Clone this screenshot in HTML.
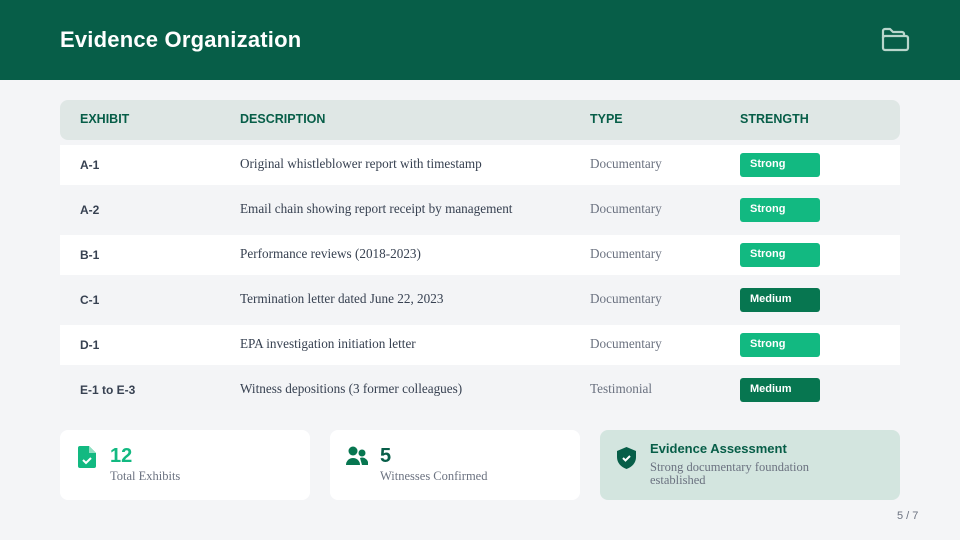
<!DOCTYPE html>
<html><head><meta charset="utf-8"><style>
*{margin:0;padding:0;box-sizing:border-box}
body{width:960px;height:540px;overflow:hidden;background:#f4f5f7;font-family:"Liberation Sans",sans-serif;position:relative}
.hdr{position:absolute;left:0;top:0;width:960px;height:80px;background:#075e48}
.hdr h1{position:absolute;left:60px;top:27px;color:#fff;font-size:22px;font-weight:bold;letter-spacing:0.2px}
.th{position:absolute;left:60px;top:100px;width:840px;height:40px;background:#dfe7e5;border-radius:8px}
.th span,.row span{position:absolute;top:0;line-height:37px}
.th span{color:#075e48;font-weight:bold;font-size:12.5px}
.row{position:absolute;left:60px;width:840px;height:40px}
.row .c1{left:20px;font-size:12px;font-weight:bold;color:#374151;line-height:40px}
.c2{left:180px;font-family:"Liberation Serif",serif;font-size:13.2px;color:#374151}
.c3{left:530px;font-family:"Liberation Serif",serif;font-size:13.2px;color:#6b7280}
.b{position:absolute;left:680px;top:8px;width:80px;height:24px;border-radius:3px;color:#fff;font-size:11px;font-weight:bold;line-height:22px;padding-left:10px}
.s{background:#12b981}.m{background:#077650}
.card{position:absolute;top:430px;height:70px;border-radius:8px;background:#fff}
.num{position:absolute;left:50px;top:15px;font-size:20px;font-weight:bold}
.lab{position:absolute;left:50px;top:39px;font-family:"Liberation Serif",serif;font-size:12.5px;color:#6b7280}
</style></head><body>
<div class="hdr"><h1>Evidence Organization</h1>
<svg style="position:absolute;left:880px;top:26px" width="32" height="28" viewBox="0 0 32 28" fill="none" stroke="#b9d6cc" stroke-width="2.2" stroke-linejoin="round"><path d="M3 12V5a2 2 0 0 1 2-2h5l3 3h9a2 2 0 0 1 2 2v2"/><path d="M3 12a2 2 0 0 1 2-2h21a2 2 0 0 1 2 2v10a2 2 0 0 1-2 2H5a2 2 0 0 1-2-2z"/></svg>
</div>
<div class="th"><span style="left:20px;line-height:38px">EXHIBIT</span><span style="left:180px;line-height:38px">DESCRIPTION</span><span style="left:530px;line-height:38px">TYPE</span><span style="left:680px;line-height:38px">STRENGTH</span></div>
<div class="row" style="top:145px;background:#fff"><span class="c1">A-1</span><span class="c2">Original whistleblower report with timestamp</span><span class="c3">Documentary</span><div class="b s">Strong</div></div>
<div class="row" style="top:190px;background:#f3f4f6"><span class="c1">A-2</span><span class="c2">Email chain showing report receipt by management</span><span class="c3">Documentary</span><div class="b s">Strong</div></div>
<div class="row" style="top:235px;background:#fff"><span class="c1">B-1</span><span class="c2">Performance reviews (2018-2023)</span><span class="c3">Documentary</span><div class="b s">Strong</div></div>
<div class="row" style="top:280px;background:#f3f4f6"><span class="c1">C-1</span><span class="c2">Termination letter dated June 22, 2023</span><span class="c3">Documentary</span><div class="b m">Medium</div></div>
<div class="row" style="top:325px;background:#fff"><span class="c1">D-1</span><span class="c2">EPA investigation initiation letter</span><span class="c3">Documentary</span><div class="b s">Strong</div></div>
<div class="row" style="top:370px;background:#f3f4f6"><span class="c1">E-1 to E-3</span><span class="c2">Witness depositions (3 former colleagues)</span><span class="c3">Testimonial</span><div class="b m">Medium</div></div>

<div class="card" style="left:60px;width:250px">
<svg style="position:absolute;left:18px;top:16px" width="18" height="22" viewBox="0 0 18 22"><path d="M2 0h9l7 7v13a2 2 0 0 1-2 2H2a2 2 0 0 1-2-2V2a2 2 0 0 1 2-2z" fill="#12b981"/><path d="M11 0v7h7" fill="#8fe0c2"/><path d="M5 14l3 3 5-5" stroke="#fff" stroke-width="2" fill="none"/></svg>
<div class="num" style="color:#12b981">12</div><div class="lab">Total Exhibits</div></div>
<div class="card" style="left:330px;width:250px">
<svg style="position:absolute;left:16px;top:16px" width="22" height="20" viewBox="0 0 22 20" fill="#077650"><circle cx="7" cy="5" r="4.5"/><path d="M0 19a7 7 0 0 1 14 0z"/><circle cx="16" cy="7" r="3.5"/><path d="M14 12a6 6 0 0 1 8 7h-6z"/></svg>
<div class="num" style="color:#075e48">5</div><div class="lab">Witnesses Confirmed</div></div>
<div class="card" style="left:600px;width:300px;background:#d3e5df">
<svg style="position:absolute;left:17px;top:17px" width="19" height="22" viewBox="0 0 19 22"><path d="M9.5 0L19 4v6c0 6-4 10-9.5 12C4 20 0 16 0 10V4z" fill="#075e48"/><path d="M6 11l2.5 2.5L13 9" stroke="#fff" stroke-width="2" fill="none"/></svg>
<div style="position:absolute;left:50px;top:11px;color:#075e48;font-weight:bold;font-size:13px">Evidence Assessment</div>
<div style="position:absolute;left:50px;top:31px;width:200px;font-family:'Liberation Serif',serif;font-size:12.5px;line-height:13px;color:#6b7280">Strong documentary foundation established</div></div>
<div style="position:absolute;left:897px;top:510px;font-size:11px;color:#6b7280">5 / 7</div>
</body></html>
